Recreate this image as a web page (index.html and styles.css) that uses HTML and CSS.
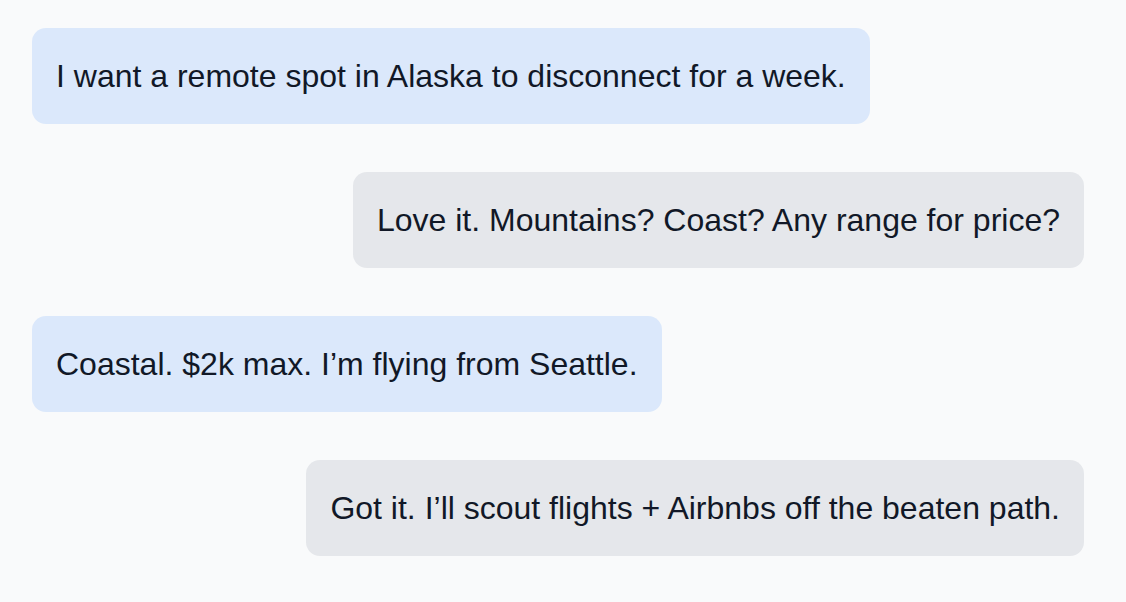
FILE: index.html
```html
<!DOCTYPE html>
<html lang="en">
<head>
<meta charset="utf-8">
<title>Chat</title>
<link rel="stylesheet" href="styles.css">
</head>
<body>
<main class="chat">
  <div class="msg msg-user">I want a remote spot in Alaska to disconnect for a week.</div>
  <div class="msg msg-bot">Love it. Mountains? Coast? Any range for price?</div>
  <div class="msg msg-user">Coastal. $2k max. I’m flying from Seattle.</div>
  <div class="msg msg-bot">Got it. I’ll scout flights + Airbnbs off the beaten path.</div>
</main>
</body>
</html>
```
FILE: styles.css
```css
html, body {
  margin: 0;
  padding: 0;
  background: #f9fafb;
}
body {
  font-family: "Liberation Sans", Arial, sans-serif;
  color: #111827;
}
.chat {
  display: flex;
  flex-direction: column;
  gap: 48px;
  padding: 28px 42px 28px 32px;
}
.msg {
  font-size: 32px;
  line-height: 48px;
  padding: 24px;
  border-radius: 14px;
  max-width: 80%;
}
.msg-user {
  align-self: flex-start;
  background: #dbe8fb;
}
.msg-bot {
  align-self: flex-end;
  background: #e5e7eb;
}
```
